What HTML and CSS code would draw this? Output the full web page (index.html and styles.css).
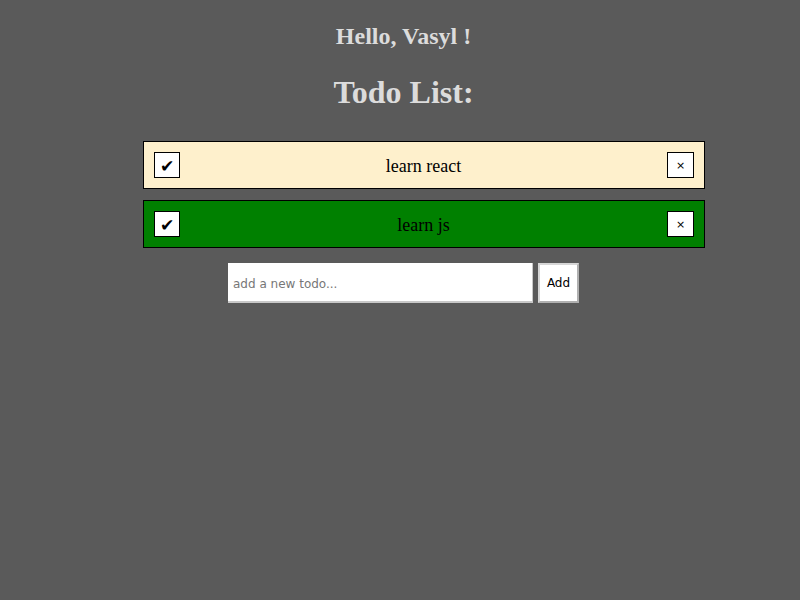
FILE: index.html
```html
<!DOCTYPE html>
<html>
<head>
<meta charset="utf-8">
<link rel="stylesheet" href="styles.css">
</head>
<body>
<div class="app">
  <h2 class="hello">Hello, Vasyl !</h2>
  <h1 class="title">Todo List:</h1>
  <div class="list">
    <div class="item item-pending">
      <button class="check">✔</button>
      <span class="label">learn react</span>
      <button class="remove">×</button>
    </div>
    <div class="item item-done">
      <button class="check">✔</button>
      <span class="label">learn js</span>
      <button class="remove">×</button>
    </div>
  </div>
  <form class="add-form">
    <input class="add-input" type="text" placeholder="add a new todo...">
    <button class="add-btn" type="button">Add</button>
  </form>
</div>
</body>
</html>
```

FILE: styles.css
```css
html, body {
  margin: 0;
  padding: 0;
  background: #5a5a5a;
}
body {
  font-family: "Liberation Serif", "Times New Roman", serif;
}
.app {
  display: flex;
  flex-direction: column;
  align-items: center;
  padding: 22px 0 0 7px;
}
.hello {
  margin: 0;
  font-size: 24px;
  font-weight: bold;
  color: #dcdcdc;
  line-height: 28px;
}
.title {
  margin: 24px 0 0 0;
  font-size: 32px;
  font-weight: bold;
  color: #dcdcdc;
  line-height: 37px;
}
.list {
  margin: 30px 0 0 41px;
  width: 562px;
  display: flex;
  flex-direction: column;
  gap: 11px;
}
.item {
  box-sizing: border-box;
  height: 48px;
  border: 1px solid #000;
  display: flex;
  align-items: center;
  padding: 0 10px;
}
.item-pending { background: #fef0cc; }
.item-done { background: #008000; }
.label {
  flex: 1;
  text-align: center;
  font-size: 18px;
  color: #000;
  padding-top: 2px;
}
.check, .remove {
  box-sizing: border-box;
  width: 27px;
  height: 26px;
  border: 1px solid #000;
  background: #fff;
  padding: 0;
  margin: 0;
  display: flex;
  align-items: center;
  justify-content: center;
  color: #000;
}
.check {
  width: 26px;
  font-family: "DejaVu Sans", sans-serif;
  font-size: 17px;
  padding-top: 2px;
}
.remove {
  font-family: "DejaVu Sans", sans-serif;
  font-size: 11px;
}
.add-form {
  margin: 15px 0 0 0;
  display: flex;
  gap: 5px;
}
.add-input {
  box-sizing: border-box;
  width: 305px;
  height: 40px;
  border: none;
  border-bottom: 2px solid #c8c8c8;
  border-right: 1px solid #c8c8c8;
  background: #fff;
  padding: 3px 5px 0 5px;
  font-family: "DejaVu Sans", Verdana, sans-serif;
  font-size: 12px;
  outline: none;
}
.add-input::placeholder { color: #777; }
.add-btn {
  box-sizing: border-box;
  width: 41px;
  height: 40px;
  border: 2px solid #d6d6d6;
  border-right-color: #b0b0b0;
  border-bottom-color: #b0b0b0;
  background: #fff;
  font-family: "DejaVu Sans", Verdana, sans-serif;
  font-size: 12px;
  color: #000;
  padding: 0;
}
```
